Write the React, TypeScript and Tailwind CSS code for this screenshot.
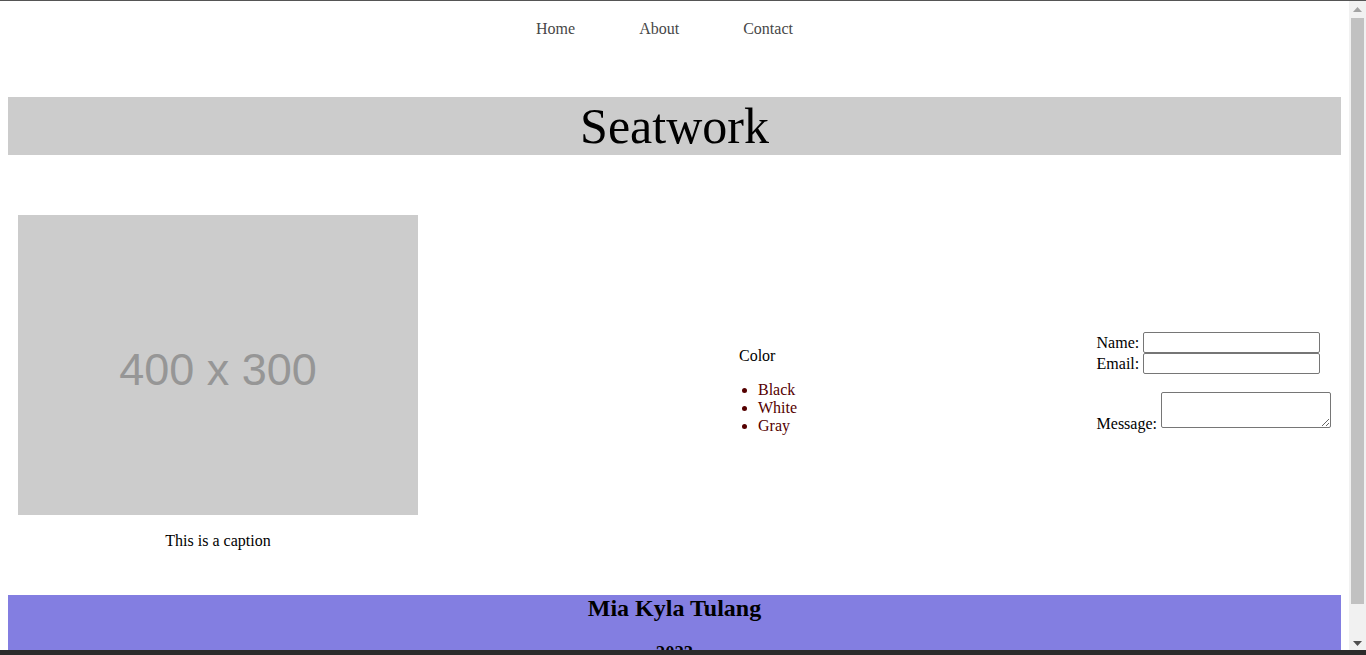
import React from "react";

export default function App() {
  const serif = { fontFamily: '"Liberation Serif", "Times New Roman", serif' };
  return (
    <div className="w-[1366px] h-[655px] overflow-hidden flex flex-col bg-white text-black" style={serif}>
      <div className="h-px bg-[#555555] shrink-0" />
      <div className="flex flex-1 min-h-0">
        <div className="w-[1349px] h-full overflow-hidden px-[8px]">
          <nav className="pt-[19px] flex justify-center gap-[64px] pr-[20px] text-[16px] leading-[18px] text-[#474747]">
            <span>Home</span>
            <span>About</span>
            <span>Contact</span>
          </nav>
          <header className="mt-[59px] h-[58px] bg-[#cccccc] flex items-center justify-center">
            <h1 className="text-[50px] leading-[58px] font-normal">Seatwork</h1>
          </header>
          <main className="mt-[60px] flex items-start">
            <figure className="ml-[10px] w-[400px] flex flex-col items-center">
              <div className="w-[400px] h-[300px] bg-[#cccccc] flex items-center justify-center">
                <span
                  className="mt-[10px] text-[45px] text-[#969696]"
                  style={{ fontFamily: '"Liberation Sans", Arial, sans-serif' }}
                >
                  400 x 300
                </span>
              </div>
              <figcaption className="mt-[17px] text-[16px] leading-[18px]">This is a caption</figcaption>
            </figure>
            <section className="ml-[321px] mt-[132px] text-[16px] leading-[18px]">
              <p>Color</p>
              <ul className="mt-[16px] pl-[19px] list-disc text-[#550000] marker:text-[#550000]">
                <li>Black</li>
                <li>White</li>
                <li>Gray</li>
              </ul>
            </section>
            <form className="ml-auto mr-[10px] mt-[117px] text-[16px] leading-[18px] flex flex-col">
              <div className="flex items-center gap-[4px]">
                <label>Name:</label>
                <input type="text" className="w-[177px] h-[21px] border border-[#767676] rounded-[2px] bg-white" />
              </div>
              <div className="flex items-center gap-[4px]">
                <label>Email:</label>
                <input type="text" className="w-[177px] h-[21px] border border-[#767676] rounded-[2px] bg-white" />
              </div>
              <div className="mt-[18px] flex items-end gap-[4px]">
                <label className="mb-[-5px]">Message:</label>
                <textarea className="w-[170px] h-[36px] border border-[#767676] rounded-[2px] bg-white" />
              </div>
            </form>
          </main>
          <footer className="mt-[45px] bg-[#837ee1] h-[80px] flex flex-col items-center">
            <h2 className="text-[24px] leading-[27px] font-bold mt-0">Mia Kyla Tulang</h2>
            <h3 className="text-[18.72px] leading-[21px] font-bold mt-[20px]">2023</h3>
          </footer>
        </div>
        <div className="w-[17px] h-full bg-[#f1f1f1] flex flex-col items-center shrink-0">
          <div className="h-[17px] w-full flex items-center justify-center">
            <svg width="9" height="5" viewBox="0 0 9 5"><path d="M0 5 L4.5 0 L9 5 Z" fill="#a3a3a3" /></svg>
          </div>
          <div className="w-[13px] flex-1 bg-[#c1c1c1] mb-[31px]" />
          <div className="h-[17px] w-full flex items-center justify-center mb-[-2px]">
            <svg width="9" height="5" viewBox="0 0 9 5"><path d="M0 0 L9 0 L4.5 5 Z" fill="#505050" /></svg>
          </div>
        </div>
      </div>
      <div className="h-[5px] bg-[#2b2b2b] shrink-0" />
    </div>
  );
}
